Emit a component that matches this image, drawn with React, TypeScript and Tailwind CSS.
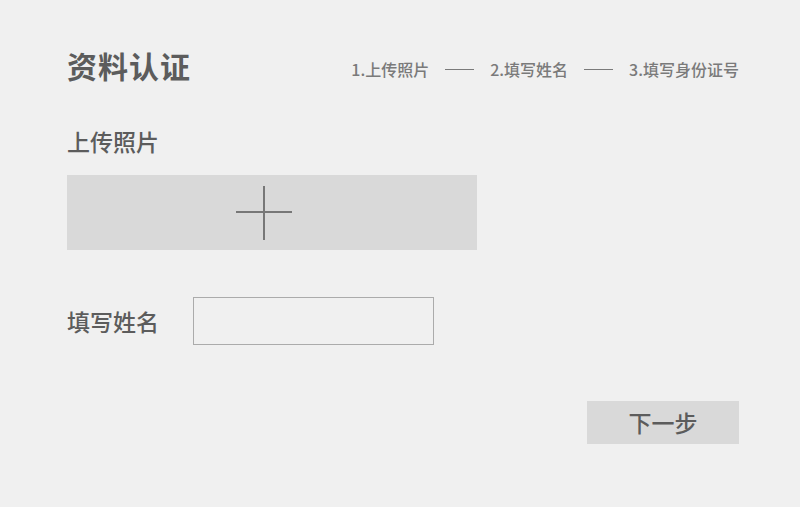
import React from "react";

const steps = ["1.上传照片", "2.填写姓名", "3.填写身份证号"];

export default function App() {
  return (
    <div
      className="w-[800px] h-[507px] bg-[#f0f0f0] text-[#5c5c5c]"
      style={{ fontFamily: '"Noto Sans CJK SC", "Noto Sans", sans-serif' }}
    >
      <div className="ml-[67px] w-[672px] pt-[47px]">
        {/* 标题 + 步骤 */}
        <div className="flex items-start justify-between">
          <h1 className="text-[30px] leading-[36px] font-bold tracking-[1px]">资料认证</h1>
          <div className="flex items-center gap-[16px] mt-[12px] text-[16px] leading-[20px] text-[#7a7a7a] font-medium">
            {steps.map((s, i) => (
              <React.Fragment key={s}>
                {i > 0 && <span className="block w-[29px] h-px bg-[#7a7a7a]" />}
                <span>{s}</span>
              </React.Fragment>
            ))}
          </div>
        </div>

        {/* 上传照片 */}
        <div className="mt-[44px] text-[23px] leading-[28px] font-medium">上传照片</div>
        <button className="mt-[20px] w-[410px] h-[75px] bg-[#d9d9d9] flex items-center justify-center">
          <svg width="56" height="54" viewBox="0 0 56 54" className="mr-[16px]">
            <path d="M0 26H56M28 0V54" stroke="#777" strokeWidth="2" fill="none" />
          </svg>
        </button>

        {/* 填写姓名 */}
        <div className="mt-[47px] flex items-center">
          <span className="text-[23px] leading-[28px] font-medium w-[126px]">填写姓名</span>
          <input className="w-[241px] h-[48px] border border-[#ababab] bg-transparent outline-none" />
        </div>

        {/* 下一步 */}
        <div className="mt-[56px] flex justify-end">
          <button className="w-[152px] h-[43px] bg-[#d9d9d9] text-[23px] leading-none text-[#5c5c5c] font-medium">
            下一步
          </button>
        </div>
      </div>
    </div>
  );
}
